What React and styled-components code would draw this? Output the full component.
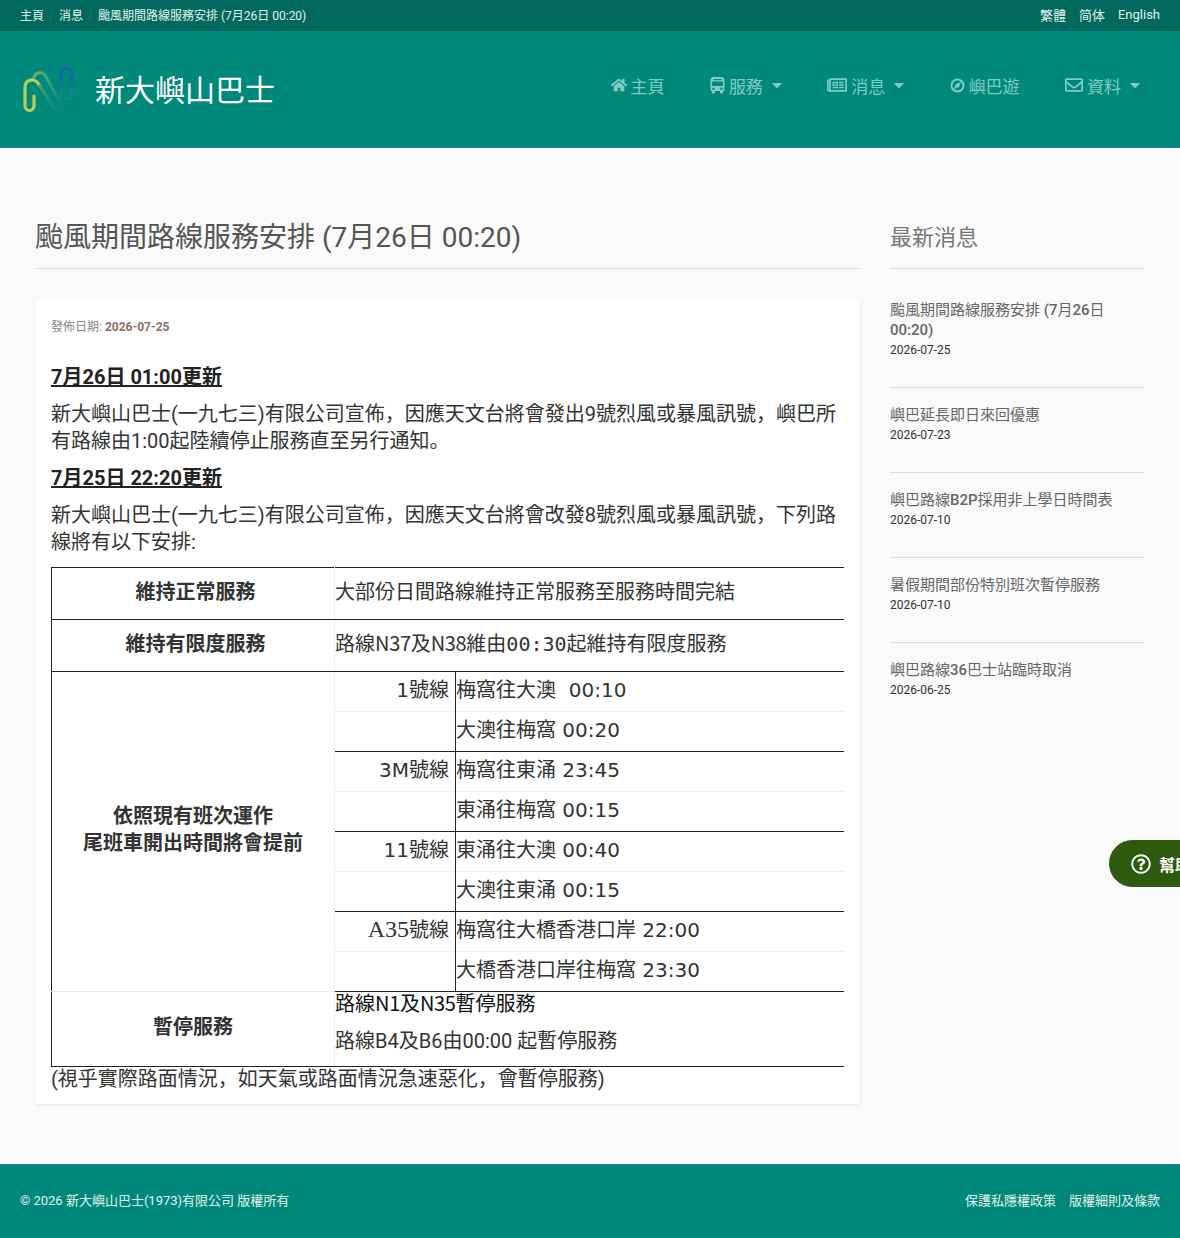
import React from 'react'
import styled, { createGlobalStyle } from 'styled-components'
import { FaHome, FaRegNewspaper, FaRegEnvelope, FaCaretDown, FaRegQuestionCircle } from 'react-icons/fa'

const NEWS = [
  ['颱風期間路線服務安排 (7月26日 00:20)', '2026-07-25'],
  ['嶼巴延長即日來回優惠', '2026-07-23'],
  ['嶼巴路線B2P採用非上學日時間表', '2026-07-10'],
  ['暑假期間部份特別班次暫停服務', '2026-07-10'],
  ['嶼巴路線36巴士站臨時取消', '2026-06-25'],
]

const ROUTES = [
  ['1', '梅窩往大澳 \u00a000:10', '大澳往梅窩 00:20'],
  ['3M', '梅窩往東涌 23:45', '東涌往梅窩 00:15'],
  ['11', '東涌往大澳 00:40', '大澳往東涌 00:15'],
  ['A35', '梅窩往大橋香港口岸 22:00', '大橋香港口岸往梅窩 23:30'],
]

export default function App() {
  return (
    <Page>
      <GlobalStyle />
      <TopBar>
        <Crumbs>
          <a>主頁</a><Slash>/</Slash><a>消息</a><Slash>/</Slash><a>颱風期間路線服務安排 (7月26日 00:20)</a>
        </Crumbs>
        <Langs>
          <a>繁體</a><a>简体</a><a>English</a>
        </Langs>
      </TopBar>
      <Header>
        <Brand>
          <Logo />
          <BrandName>新大嶼山巴士</BrandName>
        </Brand>
        <Nav>
          <NavItem><FaHome size={16} /><span>主頁</span></NavItem>
          <NavItem $menu><BusIcon /><span>服務</span><FaCaretDown size={16} /></NavItem>
          <NavItem $menu><FaRegNewspaper size={20} /><span>消息</span><FaCaretDown size={16} /></NavItem>
          <NavItem><CompassIcon /><span>嶼巴遊</span></NavItem>
          <NavItem $menu><FaRegEnvelope size={18} /><span>資料</span><FaCaretDown size={16} /></NavItem>
        </Nav>
      </Header>

      <Main>
        <Article>
          <PageTitle>颱風期間路線服務安排 (7月26日 00:20)</PageTitle>
          <Card>
            <Meta>發佈日期: <b>2026-07-25</b></Meta>
            <Update>7月26日 01:00更新</Update>
            <Para>新大嶼山巴士(一九七三)有限公司宣佈，因應天文台將會發出9號烈風或暴風訊號，嶼巴所有路線由1:00起陸續停止服務直至另行通知。</Para>
            <Update>7月25日 22:20更新</Update>
            <Para>新大嶼山巴士(一九七三)有限公司宣佈，因應天文台將會改發8號烈風或暴風訊號，下列路線將有以下安排:</Para>
            <Notice>
              <tbody>
                <tr>
                  <Head $inset>維持正常服務</Head>
                  <Wide colSpan={2}>大部份日間路線維持正常服務至服務時間完結</Wide>
                </tr>
                <tr>
                  <Head $inset>維持有限度服務</Head>
                  <Wide colSpan={2}>路線<Cjk>N37</Cjk>及<Cjk>N38</Cjk>維由<Mono>00:30</Mono>起維持有限度服務</Wide>
                </tr>
                {ROUTES.map(([line, out, back], i) => (
                  <React.Fragment key={line}>
                    <tr>
                      {i === 0 && (
                        <Head rowSpan={8} $span>依照現有班次運作<br />尾班車開出時間將會提前</Head>
                      )}
                      <Line>{line === 'A35' ? <Serif>{line}</Serif> : line}號線</Line>
                      <Trip>{out}</Trip>
                    </tr>
                    <tr>
                      <Line $blank />
                      <Trip $blank>{back}</Trip>
                    </tr>
                  </React.Fragment>
                ))}
                <tr>
                  <Head $last>暫停服務</Head>
                  <Wide colSpan={2} $last>
                    <Stop $dark>路線<Cjk>N1</Cjk>及<Cjk>N35</Cjk>暫停服務</Stop>
                    <Stop>路線B4及B6由00:00 起暫停服務</Stop>
                  </Wide>
                </tr>
              </tbody>
            </Notice>
            <Foot>(視乎實際路面情況，如天氣或路面情況急速惡化，會暫停服務)</Foot>
          </Card>
        </Article>
        <Aside>
          <SideTitle>最新消息</SideTitle>
          {NEWS.map(([title, date]) => (
            <NewsItem key={title}>
              <NewsTitle>
                {title.split(/([\x21-\x7e]+)/).map((part, i) => (i % 2 ? <Latin key={i}>{part}</Latin> : part))}
              </NewsTitle>
              <NewsDate>{date}</NewsDate>
            </NewsItem>
          ))}
        </Aside>
      </Main>

      <HelpTab>
        <FaRegQuestionCircle size={20} />
        <span>幫助</span>
      </HelpTab>

      <Footer>
        <span>© 2026 新大嶼山巴士(1973)有限公司 版權所有</span>
        <FooterLinks><a>保護私隱權政策</a><a>版權細則及條款</a></FooterLinks>
      </Footer>
    </Page>
  )
}

function BusIcon() {
  return (
    <svg width="15" height="18" viewBox="0 0 15 18" fill="currentColor">
      <path fillRule="evenodd" d="M3.5 1h8A3 3 0 0 1 14.5 4v10a1 1 0 0 1-1 1H13v1.5a1 1 0 0 1-1 1h-1a1 1 0 0 1-1-1V15H5v1.5a1 1 0 0 1-1 1H3a1 1 0 0 1-1-1V15h-.5a1 1 0 0 1-1-1V4A3 3 0 0 1 3.5 1ZM4 3a.6.6 0 0 0 0 1.2h7A.6.6 0 0 0 11 3ZM3 5.5a1 1 0 0 0-1 1V9a1 1 0 0 0 1 1h9a1 1 0 0 0 1-1V6.5a1 1 0 0 0-1-1ZM3.5 11.5a1.2 1.2 0 1 0 0 2.4 1.2 1.2 0 0 0 0-2.4ZM11.5 11.5a1.2 1.2 0 1 0 0 2.4 1.2 1.2 0 0 0 0-2.4Z" />
    </svg>
  )
}

function CompassIcon() {
  return (
    <svg width="15" height="15" viewBox="0 0 15 15" fill="none" stroke="currentColor">
      <circle cx="7.5" cy="7.5" r="6" strokeWidth="2" />
      <path d="M10.5 4.500 8.800 8.800 4.500 10.500 6.200 6.200Z" fill="currentColor" strokeWidth="0.6" />
    </svg>
  )
}

function Logo() {
  return (
    <LogoSvg viewBox="0 0 56 48" fill="none" strokeWidth="3.2" strokeLinecap="round">
      <defs>
        <linearGradient id="logoMid" x1="0" y1="0" x2="1" y2="1">
          <stop offset="0" stopColor="#6fb06a" />
          <stop offset="0.55" stopColor="#1f9a80" />
          <stop offset="1" stopColor="#0f7f86" />
        </linearGradient>
        <linearGradient id="logoBlue" x1="0" y1="1" x2="0" y2="0">
          <stop offset="0" stopColor="#0f8a8a" />
          <stop offset="1" stopColor="#1462a6" />
        </linearGradient>
      </defs>
      <path d="M14 30V40a4.500 4.500 0 0 1-9 0V21a7 7 0 0 1 12-5l3 4" stroke="#b3cf5e" />
      <path d="M14 11a6.500 6.500 0 0 1 11-2L41 38a4.500 4.500 0 0 1-7.500 3L20 20" stroke="url(#logoMid)" />
      <path d="M41 32V7.500a5.500 5.500 0 0 1 11 0V27a5.500 5.500 0 0 1-7 5.500" stroke="url(#logoBlue)" />
    </LogoSvg>
  )
}

const GlobalStyle = createGlobalStyle`
  html, body { margin: 0; padding: 0; background: #fafafa; }
  body { font-family: Roboto, "Noto Sans CJK JP", sans-serif; color: #444; }
  * { box-sizing: border-box; }
`

const Page = styled.div`
  position: relative;
  width: 1180px;
  height: 1238px;
  overflow: hidden;
  display: flex;
  flex-direction: column;
`

const TopBar = styled.div`
  height: 31px;
  background: #00695c;
  color: #fff;
  font-size: 12px;
  padding: 0 20px 2px;
  display: flex;
  justify-content: space-between;
  align-items: center;
`

const Crumbs = styled.div`
  display: flex;
  align-items: center;
  color: #e0f2f1;
`

const Slash = styled.span`
  color: #1f7a6f;
  margin: 0 5px;
`

const Langs = styled.div`
  display: flex;
  align-items: center;
  gap: 13px;
  font-size: 13px;
  color: #e0f2f1;
`

const Header = styled.header`
  height: 117px;
  background: #00897b;
  display: flex;
  justify-content: space-between;
  padding: 0 20px;
`

const Brand = styled.div`
  display: flex;
  align-items: center;
  gap: 19px;
`

const LogoSvg = styled.svg`
  width: 56px;
  height: 48px;
`

const BrandName = styled.div`
  font-size: 30px;
  color: #fff;
  margin-bottom: 4px;
`

const Nav = styled.nav`
  display: flex;
  align-items: center;
  height: 108px;
  color: #80cbc4;
  font-size: 17px;
`

const NavItem = styled.div`
  display: flex;
  align-items: center;
  gap: 4px;
  padding: 0 22.7px;
  &:last-child { padding-right: 20px; }
  svg:last-child { margin: 0 -3px 0 ${p => (p.$menu ? '2px' : '0')}; }
`

const Main = styled.main`
  flex: 1;
  display: flex;
  gap: 30px;
  padding: 68px 35px 0;
`

const Article = styled.div`
  width: 825px;
`

const PageTitle = styled.h1`
  margin: 0 0 30px;
  height: 53px;
  font-size: 28px;
  line-height: 44px;
  font-weight: 400;
  color: #555;
  border-bottom: 1px solid #ddd;
`

const Card = styled.div`
  background: #fff;
  box-shadow: 0 1px 3px rgba(0, 0, 0, 0.08);
  border-radius: 2px;
  padding: 17px 16px 12px;
  color: #333;
`

const Meta = styled.div`
  font-size: 12px;
  line-height: 22px;
  color: #888;
  margin-bottom: 26px;
  b { color: #8d6e63; font-weight: 700; }
`

const Update = styled.div`
  font-size: 20px;
  line-height: 27px;
  font-weight: 700;
  color: #222;
  text-decoration: underline;
  margin-bottom: 10px;
`

const Para = styled.p`
  margin: 0 0 10px;
  font-size: 20px;
  line-height: 27px;
`

const Notice = styled.table`
  width: 793px;
  margin-top: 11px;
  border-collapse: collapse;
  font-size: 20px;
  line-height: 27px;
  font-family: "DejaVu Sans", "Noto Sans CJK JP", sans-serif;
`

const Head = styled.td`
  width: 283px;
  height: 52px;
  padding: 0 0 ${p => (p.$span || p.$last ? '4px' : '2px')} ${p => (p.$inset ? '5px' : '0')};
  text-align: center;
  font-weight: 700;
  font-family: Roboto, "Noto Sans CJK JP", sans-serif;
  border: 1px solid #222;
  border-top: 1px solid ${p => (p.$last ? '#e8e8e8' : '#222')};
  border-bottom: 1px solid ${p => (p.$span ? '#e8e8e8' : '#222')};
  border-right: 1px solid #eee;
`

const Wide = styled.td`
  height: ${p => (p.$last ? '75px' : '52px')};
  padding: 0 0 ${p => (p.$last ? '0' : '2px')};
  vertical-align: ${p => (p.$last ? 'top' : 'middle')};
  border-top: 1px solid #222;
  border-bottom: 1px solid #222;
  font-family: Roboto, "Noto Sans CJK JP", sans-serif;
`

const Cjk = styled.span`
  font-family: "Noto Sans CJK JP", sans-serif;
  line-height: 1;
  letter-spacing: -0.33px;
`

const Mono = styled.span`
  font-family: "DejaVu Sans Mono", monospace;
  line-height: 1;
`

const Serif = styled.span`
  font-family: "Liberation Serif", serif;
  font-size: 24px;
  line-height: 1;
`

const Line = styled.td`
  width: 121px;
  height: 40px;
  padding: 0 6px 2px 0;
  text-align: right;
  border-top: 1px solid ${p => (p.$blank ? '#eee' : '#222')};
  border-right: 1px solid #222;
`

const Trip = styled.td`
  height: 40px;
  padding: 0 0 2px;
  border-top: 1px solid ${p => (p.$blank ? '#eee' : '#222')};
`

const Stop = styled.p`
  margin: -1px 0 11px;
  line-height: 27px;
  color: ${p => (p.$dark ? '#111' : '#333')};
`

const Foot = styled.div`
  font-size: 20px;
  line-height: 25px;
`

const Aside = styled.aside`
  width: 255px;
`

const SideTitle = styled.h2`
  margin: 0 0 32px;
  height: 53px;
  font-size: 22px;
  line-height: 44px;
  font-weight: 400;
  color: #777;
  border-bottom: 1px solid #ddd;
`

const NewsItem = styled.div`
  padding: 0 0 29.5px;
  margin-bottom: 17.5px;
  border-bottom: 1px solid #ddd;
  &:last-child { border-bottom: 0; }
`

const NewsTitle = styled.div`
  font-size: 15px;
  line-height: 19.5px;
  color: #666;
`

const Latin = styled.span`
  font-weight: 500;
`

const NewsDate = styled.div`
  font-size: 12px;
  line-height: 16px;
  margin-top: 1.5px;
  color: #333;
`

const HelpTab = styled.div`
  position: absolute;
  left: 1109px;
  top: 840px;
  width: 120px;
  height: 47px;
  border-radius: 24px;
  background: #2d5a0e;
  color: #fff;
  display: flex;
  align-items: center;
  gap: 8px;
  padding-left: 22px;
  font-size: 16px;
  font-weight: 700;
`

const Footer = styled.footer`
  height: 74px;
  background: #00897b;
  color: #e0f2f1;
  font-size: 13px;
  padding: 0 20px 4px;
  display: flex;
  justify-content: space-between;
  align-items: center;
`

const FooterLinks = styled.div`
  display: flex;
  gap: 13px;
`
